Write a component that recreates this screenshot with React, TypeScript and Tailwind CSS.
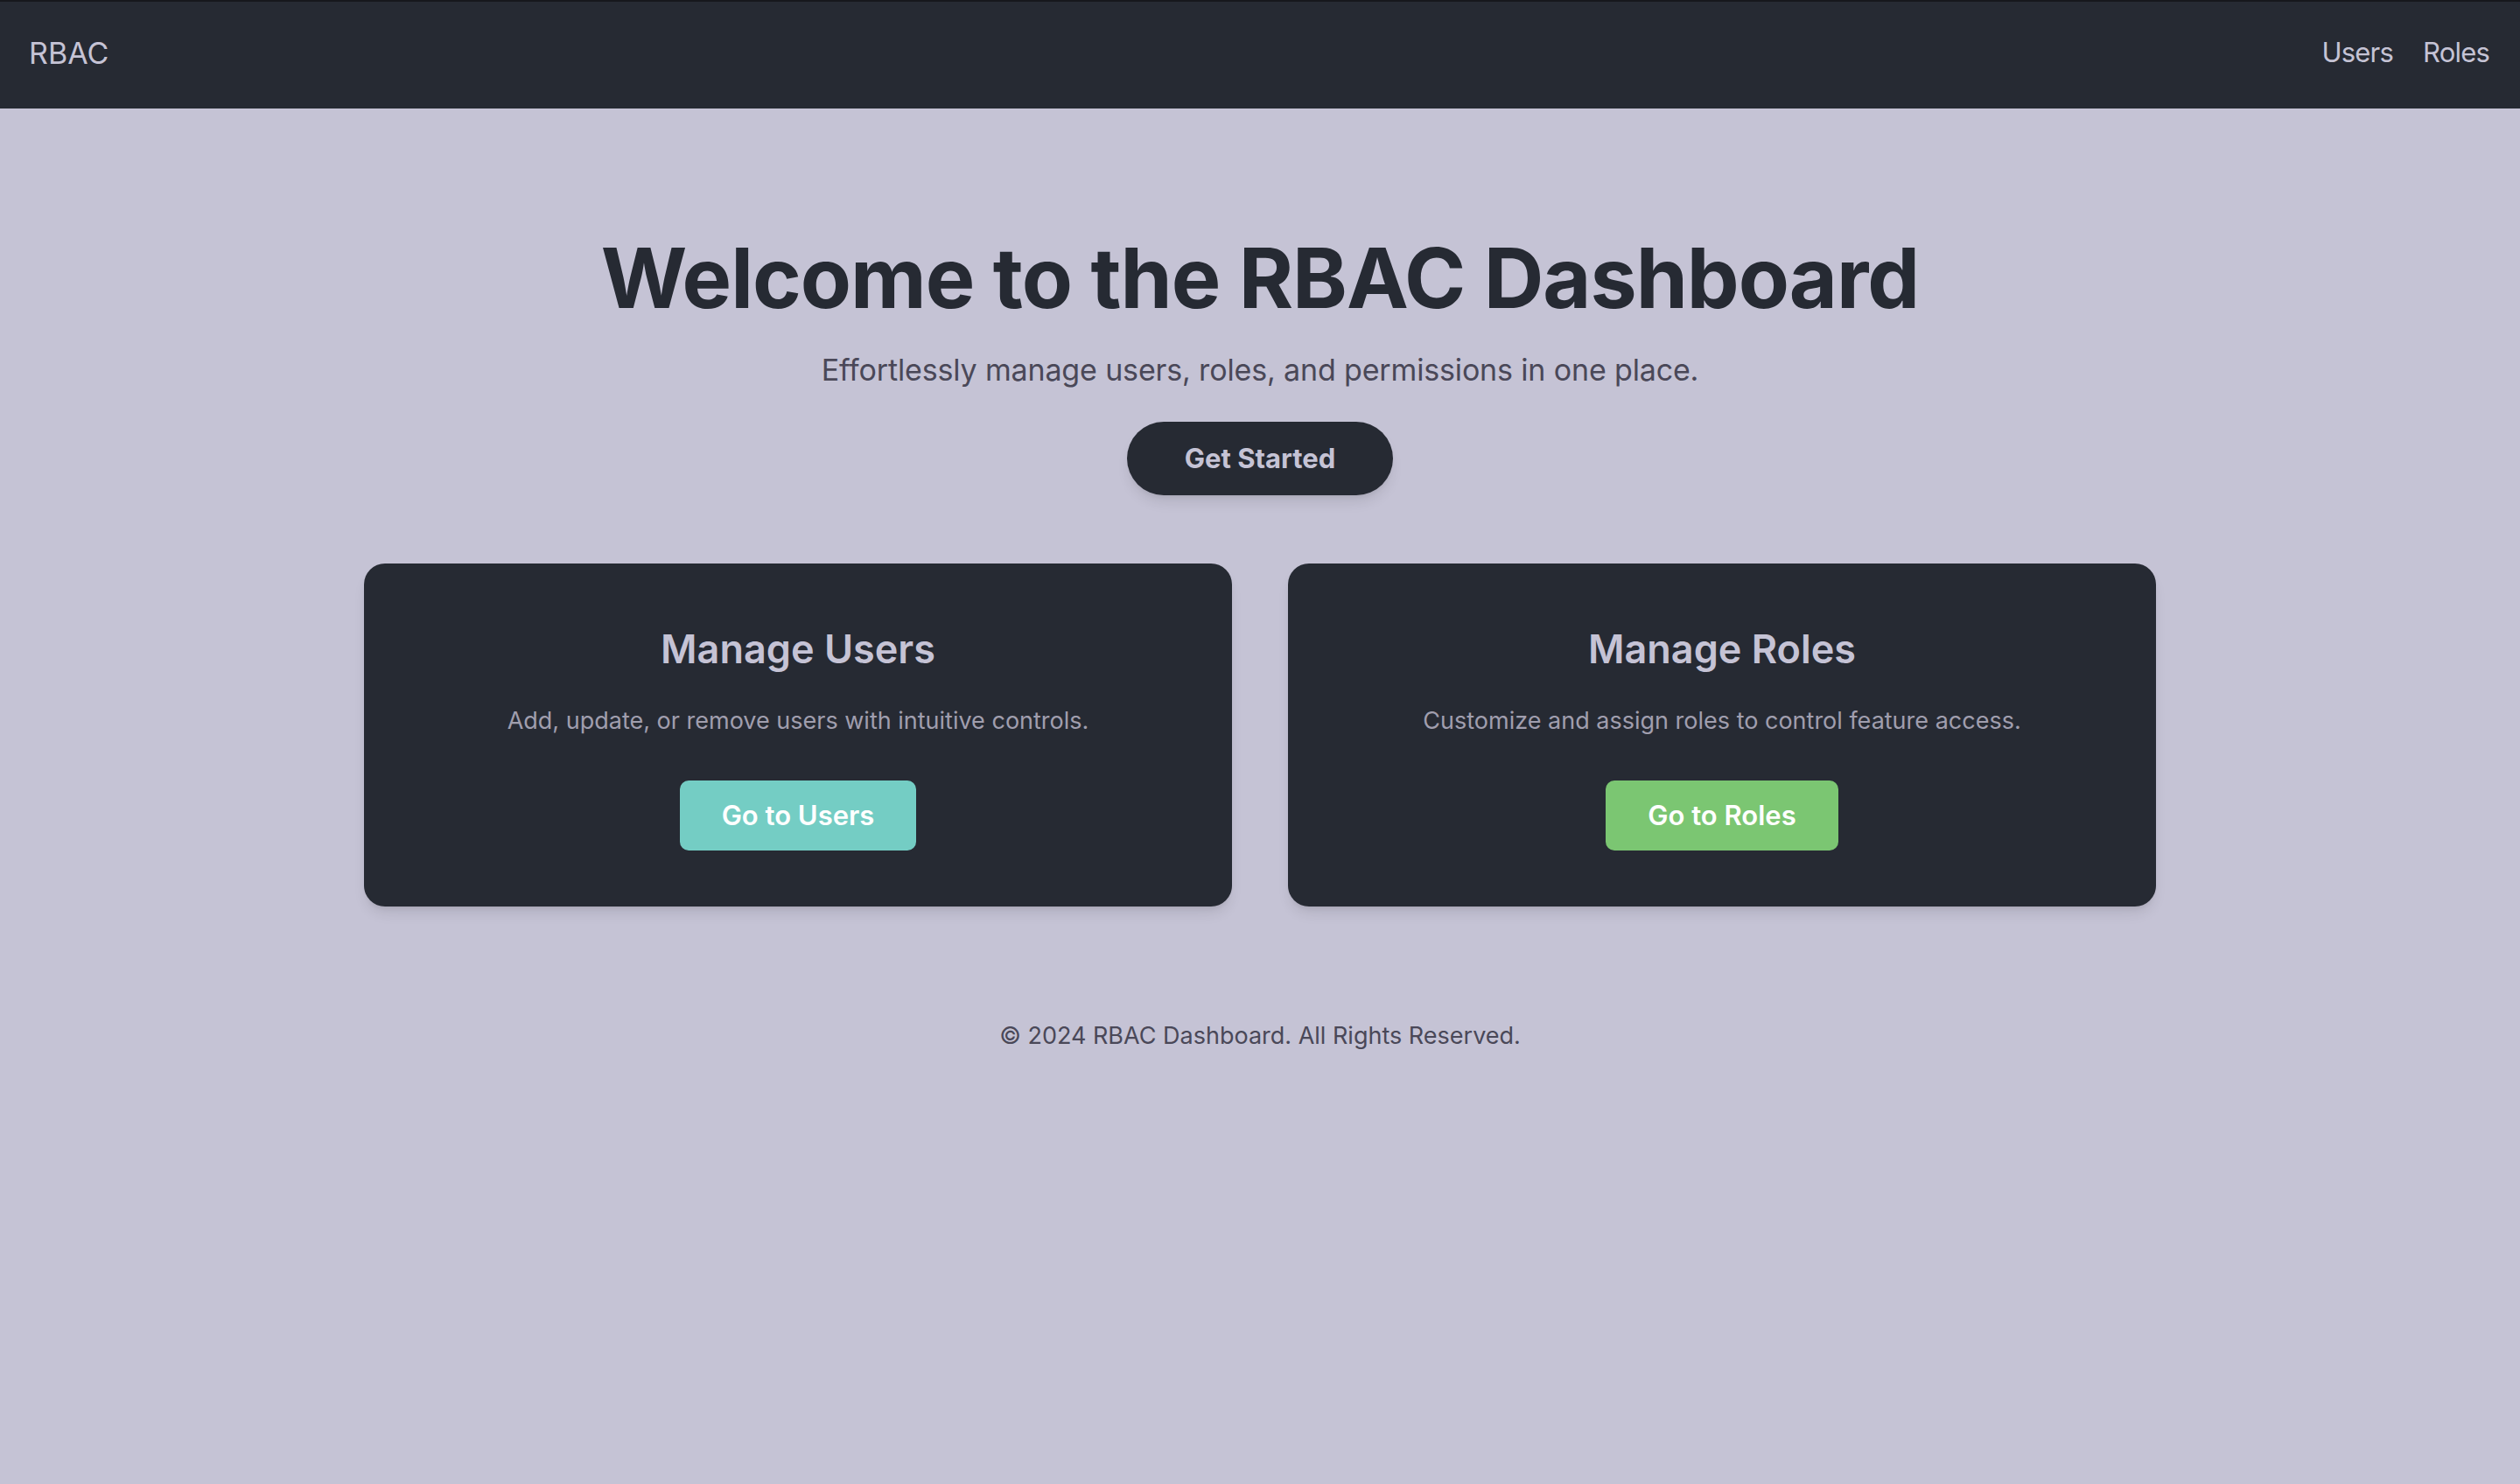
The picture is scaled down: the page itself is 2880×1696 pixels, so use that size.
const cards = [
  {
    title: "Manage Users",
    text: "Add, update, or remove users with intuitive controls.",
    button: "Go to Users",
    color: "bg-[#74cdc4]",
  },
  {
    title: "Manage Roles",
    text: "Customize and assign roles to control feature access.",
    button: "Go to Roles",
    color: "bg-[#7bc672]",
  },
];

export default function App() {
  return (
    <div className="min-h-screen bg-[#c5c3d5] font-['Inter',sans-serif]">
      <nav className="h-[124px] bg-[#262a33] border-t-2 border-[#16181d] pl-[33px] pr-[35px] pb-[6px] flex items-center justify-between text-[#c5c3d5]">
        <span className="text-[34px]">RBAC</span>
        <div className="flex gap-[34px] text-[31px] tracking-[-0.8px]">
          <a href="#">Users</a>
          <a href="#">Roles</a>
        </div>
      </nav>

      <main className="flex flex-col items-center">
        <h1 className="mt-[146px] text-[95px] leading-none font-bold tracking-[-1px] text-[#262a33]">
          Welcome to the RBAC Dashboard
        </h1>
        <p className="mt-[32px] text-[34px] leading-[51px] tracking-[-0.15px] text-[#4a4858]">
          Effortlessly manage users, roles, and permissions in one place.
        </p>
        <button className="mt-[34px] h-[84px] px-[66px] rounded-full bg-[#262a33] text-[#c5c3d5] text-[31px] font-bold shadow-lg">
          Get Started
        </button>

        <div className="mt-[78px] w-[2048px] grid grid-cols-2 gap-[64px]">
          {cards.map((c) => (
            <div
              key={c.title}
              className="bg-[#262a33] rounded-[24px] shadow-lg pt-[70px] pb-[64px] px-[64px] flex flex-col items-center text-center"
            >
              <h2 className="text-[45px] leading-[55px] font-semibold text-[#c5c3d5]">{c.title}</h2>
              <p className="mt-[35px] text-[27px] leading-[40px] text-[#a09eae]">{c.text}</p>
              <button
                className={`mt-[48px] h-[80px] px-[48px] rounded-[10px] ${c.color} text-white text-[31px] font-semibold`}
              >
                {c.button}
              </button>
            </div>
          ))}
        </div>

        <footer className="mt-[127px] text-[27px] leading-[42px] text-[#4a4858]">
          © 2024 RBAC Dashboard. All Rights Reserved.
        </footer>
      </main>
    </div>
  );
}
